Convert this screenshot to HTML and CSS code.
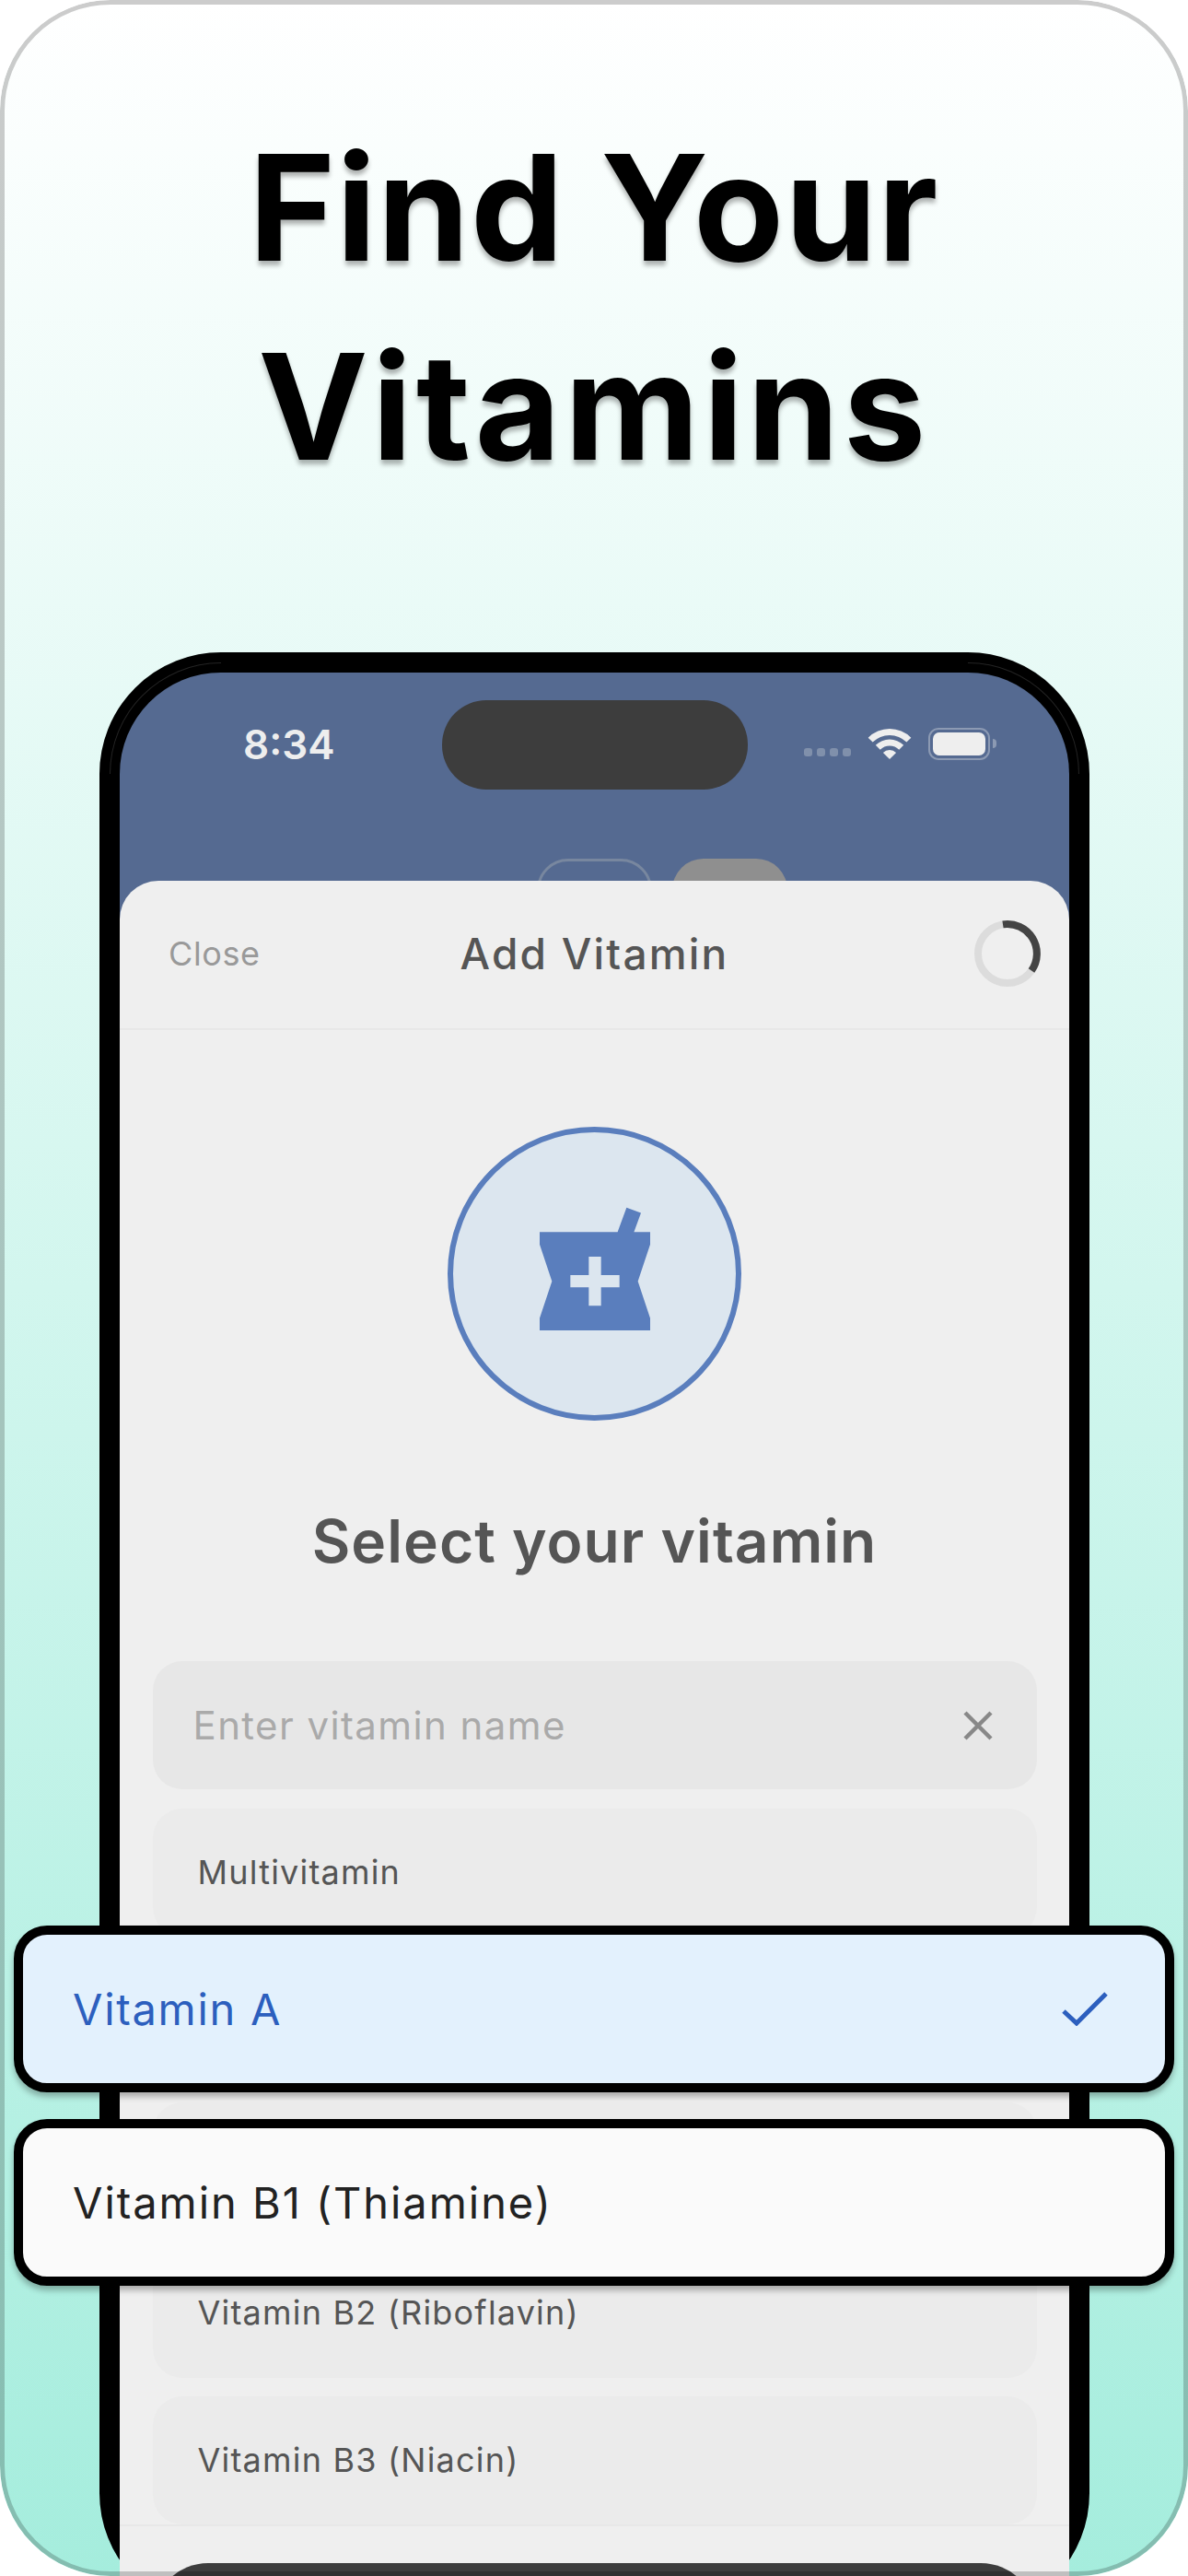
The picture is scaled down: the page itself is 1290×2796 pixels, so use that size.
FILE: index.html
```html
<!DOCTYPE html>
<html lang="en">
<head>
<meta charset="utf-8">
<title>Find Your Vitamins</title>
<link rel="stylesheet" href="styles.css">
</head>
<body>
<main class="card">
  <h1 class="headline"><span class="line line-one">Find Your</span><span class="line line-two">Vitamins</span></h1>
  <section class="phone">
    <div class="screen">
      <div class="status">
        <span class="time">8:34</span>
        <span class="island"></span>
        <div class="status-icons">
          <span class="dots"><i></i><i></i><i></i><i></i></span>
          <svg class="wifi" viewBox="0 0 44 33" aria-hidden="true"><path d="M22 33L14.9 25.9A10 10 0 0 1 29.1 25.9Z"/><path d="M11.75 22.75A14.5 14.5 0 0 1 32.25 22.75L37.2 17.8A21.5 21.5 0 0 0 6.8 17.8Z"/><path d="M3.62 14.62A26 26 0 0 1 40.38 14.62L45.33 9.67A33 33 0 0 0 -1.33 9.67Z"/></svg>
          <span class="battery"><span class="battery-level"></span></span>
        </div>
      </div>
      <div class="tabs"><span class="tab"></span><span class="tab tab-on"></span></div>
      <div class="sheet">
        <header class="sheet-head">
          <span class="close">Close</span>
          <span class="sheet-title">Add Vitamin</span>
          <svg class="spinner" viewBox="0 0 72 72" aria-hidden="true"><circle class="spin-track" cx="36" cy="36" r="32"/><path class="spin-arc" d="M31 4.4A32 32 0 0 1 62 54.5"/></svg>
        </header>
        <div class="sheet-body">
          <div class="badge">
            <svg class="mortar" viewBox="0 0 24 24" aria-hidden="true"><path d="M21 5h-2.64l1.14-3.14L17.15 1l-1.46 4H3v2l2 6-2 6v2h18v-2l-2-6 2-6V5zm-5 9h-3v3h-2v-3H8v-2h3V9h2v3h3v2z"/></svg>
          </div>
          <h2 class="prompt">Select your vitamin</h2>
          <div class="search">
            <span class="placeholder">Enter vitamin name</span>
            <svg class="clear" viewBox="0 0 32 32" aria-hidden="true"><path d="M2 2L30 30M30 2L2 30"/></svg>
          </div>
          <ul class="list">
            <li class="row">Multivitamin</li>
            <li class="row row-covered"></li>
            <li class="row row-covered"></li>
            <li class="row">Vitamin B2 (Riboflavin)</li>
            <li class="row">Vitamin B3 (Niacin)</li>
          </ul>
        </div>
        <footer class="sheet-foot"><span class="cta"></span></footer>
      </div>
    </div>
  </section>
  <div class="float float-a">
    <span>Vitamin A</span>
    <svg class="check" viewBox="0 0 50 37" aria-hidden="true"><path d="M2 21L16 34L48 2"/></svg>
  </div>
  <div class="float float-b"><span>Vitamin B1 (Thiamine)</span></div>
</main>
</body>
</html>
```

FILE: styles.css
```css
* { box-sizing: border-box; }
html, body { margin: 0; padding: 0; background: #fff; }
body { width: 1290px; height: 2796px; overflow: hidden; font-family: Inter, "Liberation Sans", sans-serif; }

.card {
  position: relative;
  width: 1290px;
  height: 2796px;
  border-radius: 120px;
  overflow: hidden;
  background: linear-gradient(180deg, #ffffff 0%, #a5eddd 100%);
}
.card::after {
  content: "";
  position: absolute;
  inset: 0;
  z-index: 3;
  border: 5px solid rgba(0, 0, 0, 0.2);
  border-radius: 120px;
  pointer-events: none;
}

.headline {
  margin: 0;
  padding-top: 117px;
  height: 708px;
  text-align: center;
  font-size: 160px;
  line-height: 216px;
  font-weight: 700;
  color: #000;
  text-shadow: 0 5px 5px rgba(0, 0, 0, 0.3);
}
.line { display: block; }
.line-one { letter-spacing: 1.3px; }
.line-two { letter-spacing: 4.5px; }

.phone {
  position: relative;
  width: 1075px;
  height: 2130px;
  margin-left: 108px;
  border: 22px solid #000;
  border-radius: 132px;
  background: #000;
}
.phone::before,
.phone::after {
  content: "";
  position: absolute;
  top: -11px;
  width: 120px;
  height: 120px;
  border-top: 1px solid rgba(255, 255, 255, 0.14);
  pointer-events: none;
}
.phone::before {
  left: -11px;
  border-left: 1px solid rgba(255, 255, 255, 0.14);
  border-top-left-radius: 121px;
}
.phone::after {
  right: -11px;
  border-right: 1px solid rgba(255, 255, 255, 0.14);
  border-top-right-radius: 121px;
}
.screen {
  position: relative;
  z-index: 1;
  height: 100%;
  border-radius: 110px 110px 0 0;
  overflow: hidden;
  background: #556a91;
}

.status {
  display: grid;
  grid-template-columns: 1fr 332px 1fr;
  align-items: center;
  padding-top: 30px;
}
.time {
  padding-left: 134px;
  font-size: 44px;
  line-height: 97px;
  font-weight: 600;
  color: #eee;
}
.island {
  height: 97px;
  border-radius: 48px;
  background: #3d3d3d;
}
.status-icons {
  display: flex;
  justify-content: flex-end;
  align-items: center;
  padding-right: 86px;
  height: 36px;
  margin-top: -3px;
}
.dots { display: flex; gap: 5px; margin-top: 18px; margin-right: 20px; }
.dots i { width: 9px; height: 9px; border-radius: 3px; background: #8090ab; }
.wifi { width: 44px; height: 33px; overflow: visible; fill: #eee; margin-right: 20px; }
.battery {
  position: relative;
  width: 67px;
  height: 35px;
  padding: 3px;
  border: 2.5px solid #8c9ab3;
  border-radius: 11px;
}
.battery::after {
  content: "";
  position: absolute;
  right: -8.5px;
  top: 10px;
  width: 4px;
  height: 10px;
  border-radius: 0 5px 5px 0;
  background: #8c9ab3;
}
.battery-level { display: block; height: 100%; border-radius: 7px; background: #eee; }

.tabs {
  display: flex;
  justify-content: center;
  gap: 22px;
  height: 24px;
  margin-top: 75px;
  padding-left: 146px;
  overflow: hidden;
}
.tab {
  width: 125px;
  height: 70px;
  border: 3px solid #78879f;
  border-radius: 34px;
}
.tab-on { border: 0; background: #8f8f8f; }

.sheet {
  border-radius: 42px 42px 0 0;
  background: #efefef;
  height: 1900px;
}
.sheet-head {
  display: grid;
  grid-template-columns: 1fr auto 1fr;
  align-items: center;
  height: 162px;
  padding: 0 31px 2px 53px;
  border-bottom: 2px solid #e8e8e8;
}
.close { font-size: 36px; letter-spacing: 0.6px; color: #999; }
.sheet-title { position: relative; left: -11px; font-size: 46px; font-weight: 500; letter-spacing: 2.2px; color: #555; }
.spinner { justify-self: end; width: 72px; height: 72px; fill: none; stroke-width: 8px; }
.spin-track { stroke: #dcdcdc; }
.spin-arc { stroke: #444; }

.sheet-body { display: flex; flex-direction: column; align-items: center; padding-top: 105px; }
.badge {
  display: flex;
  align-items: center;
  justify-content: center;
  width: 319px;
  height: 319px;
  border: 6px solid #5a7ebd;
  border-radius: 50%;
  background: #dce6ef;
}
.mortar { width: 160px; height: 160px; fill: #5a7ebd; margin-top: 2px; }

.prompt {
  margin: 91px 0 0;
  height: 170px;
  font-size: 64px;
  line-height: 80px;
  font-weight: 600;
  letter-spacing: 1.05px;
  color: #555;
}

.search {
  display: flex;
  align-items: center;
  justify-content: space-between;
  width: 960px;
  height: 139px;
  padding: 0 47px 0 44px;
  border-radius: 32px;
  background: #e7e7e7;
}
.placeholder { font-size: 42px; letter-spacing: 1.4px; color: #aaa; }
.clear { width: 32px; height: 32px; margin-right: 1px; fill: none; stroke: #888; stroke-width: 4.5px; }

.list {
  display: flex;
  flex-direction: column;
  gap: 20.5px;
  width: 960px;
  margin: 21px 0 0;
  padding: 0;
  list-style: none;
}
.row {
  display: flex;
  align-items: center;
  height: 139px;
  padding-left: 49px;
  padding-bottom: 2px;
  border-radius: 32px;
  background: #ebebeb;
  font-size: 36px;
  letter-spacing: 1.2px;
  color: #555;
}

.sheet-foot {
  margin-top: 0;
  padding: 40px 36px 0;
  border-top: 2px solid #e8e8e8;
}
.cta { display: block; height: 120px; border-radius: 60px; background: #3d3d3d; }

.float {
  position: absolute;
  z-index: 2;
  left: 15px;
  width: 1260px;
  height: 181px;
  display: flex;
  align-items: center;
  justify-content: space-between;
  padding: 0 62px 0 54px;
  border: 10px solid #000;
  border-radius: 36px;
  box-shadow: 0 5px 6px rgba(0, 0, 0, 0.28);
  font-size: 47px;
  letter-spacing: 1.7px;
}
.float-a { top: 2090px; background: #e3f1fd; color: #2c5fbe; }
.float-b { top: 2300px; background: #fafafa; color: #222; letter-spacing: 1.95px; }
.check { width: 50px; height: 37px; fill: none; stroke: #2c5fbe; stroke-width: 5px; }
```
